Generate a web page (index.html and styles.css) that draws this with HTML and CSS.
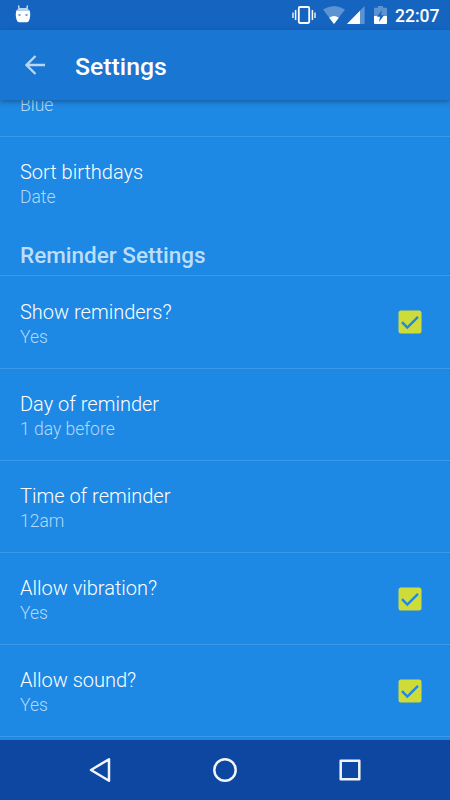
FILE: index.html
```html
<!DOCTYPE html>
<html lang="en">
<head>
<meta charset="utf-8">
<title>Settings</title>
<link rel="stylesheet" href="styles.css">
</head>
<body>
<div class="screen">
  <header class="status">
    <svg class="notification" width="16" height="18" viewBox="0 0 16 18">
      <path d="M3.500 .5L4.200 4M12.500 .5L11.800 4" stroke="#d5e4f6" stroke-width="1.300"/>
      <path d="M2 5.500Q2.300 3 4.500 3H11.500Q13.700 3 14 5.500Z" fill="#b9d3f0"/>
      <path d="M1.200 5.500H14.800Q16 12 13.800 16Q13.200 17.300 11.500 17.300H4.500Q2.800 17.300 2.200 16Q0 12 1.200 5.500Z" fill="#fff"/>
      <path d="M3.500 9h2v2h-2zM10.500 9h2v2h-2z" fill="#6f9fd8"/>
    </svg>
    <div class="indicators">
      <svg width="24" height="20" viewBox="0 0 24 20">
        <rect x="6.800" y="2" width="10.400" height="16" rx="1.200" fill="none" stroke="#fff" stroke-width="1.800"/>
        <path d="M3.600 5v10M20.400 5v10" stroke="#fff" stroke-width="1.500"/>
        <path d="M1 7.500v5.500M23 7.500v5.500" stroke="#fff" stroke-width="1.300"/>
      </svg>
      <svg class="wifi" width="22" height="18" viewBox="0 0 22 18">
        <path d="M0 3.600Q11-3.600 22 3.600L11 18Z" fill="#5b93d3"/>
        <path d="M6.200 11.700Q11 8.500 15.800 11.700L11 18Z" fill="#fff"/>
      </svg>
      <svg class="signal" width="18" height="18" viewBox="0 0 18 18">
        <path d="M0 18L17.600 0V18Z" fill="#5b93d3"/>
        <path d="M0 18L13 4.700V18Z" fill="#fff"/>
      </svg>
      <svg class="battery" width="13" height="18" viewBox="0 0 13 18">
        <path d="M1 1.800H4V0H9V1.800H12Q13 1.800 13 2.800V10H0V2.800Q0 1.800 1 1.800Z" fill="#5b93d3"/>
        <path d="M0 10H13V17Q13 18 12 18H1Q0 18 0 17Z" fill="#fff"/>
        <path d="M8 4L3 10.800H6L5 16L10 9.200H7Z" fill="#1565c0"/>
      </svg>
      <span class="clock">22:07</span>
    </div>
  </header>
  <div class="toolbar">
    <svg width="20" height="20" viewBox="0 0 20 20" fill="none" stroke="#bad6f2" stroke-width="2.300">
      <path d="M20 10H2M10.500 1L1.500 10L10.500 19"/>
    </svg>
    <h1>Settings</h1>
  </div>
  <main class="list">
    <div class="row first"><div><p class="value">Blue</p></div></div>
    <div class="row last"><div><p class="name">Sort birthdays</p><p class="value">Date</p></div></div>
    <h2>Reminder Settings</h2>
    <div class="row lead">
      <div><p class="name">Show reminders?</p><p class="value">Yes</p></div>
      <svg class="check" width="24" height="24" viewBox="0 0 24 24"><rect x=".5" y=".5" width="23" height="23" rx="2.500" fill="#cddc39"/><path d="M4 12.200L9.300 17.500L20 6.800" fill="none" stroke="#1e88e5" stroke-width="2.400"/></svg>
    </div>
    <div class="row"><div><p class="name">Day of reminder</p><p class="value">1 day before</p></div></div>
    <div class="row"><div><p class="name">Time of reminder</p><p class="value">12am</p></div></div>
    <div class="row">
      <div><p class="name">Allow vibration?</p><p class="value">Yes</p></div>
      <svg class="check" width="24" height="24" viewBox="0 0 24 24"><rect x=".5" y=".5" width="23" height="23" rx="2.500" fill="#cddc39"/><path d="M4 12.200L9.300 17.500L20 6.800" fill="none" stroke="#1e88e5" stroke-width="2.400"/></svg>
    </div>
    <div class="row">
      <div><p class="name">Allow sound?</p><p class="value">Yes</p></div>
      <svg class="check" width="24" height="24" viewBox="0 0 24 24"><rect x=".5" y=".5" width="23" height="23" rx="2.500" fill="#cddc39"/><path d="M4 12.200L9.300 17.500L20 6.800" fill="none" stroke="#1e88e5" stroke-width="2.400"/></svg>
    </div>
  </main>
  <nav class="navbar">
    <svg width="26" height="26" viewBox="0 0 26 26"><path d="M22 2.200V23.800L4 13Z"/></svg>
    <svg width="26" height="26" viewBox="0 0 26 26"><circle cx="13" cy="13" r="10.700"/></svg>
    <svg width="26" height="26" viewBox="0 0 26 26"><rect x="3.700" y="3.700" width="18.600" height="18.600"/></svg>
  </nav>
</div>
</body>
</html>
```
FILE: styles.css
```css
* { box-sizing: border-box; }
body, h1, h2, p { margin: 0; }
body { font-family: Roboto, sans-serif; color: #fff; }
svg { display: block; flex: none; }
.screen {
  width: 450px;
  height: 800px;
  display: flex;
  flex-direction: column;
  overflow: hidden;
  background: #1e88e5;
}
.status {
  height: 30px;
  flex: none;
  display: flex;
  justify-content: space-between;
  align-items: center;
  padding: 0 10.5px 0 14.5px;
  background: #1565c0;
}
.notification { margin-bottom: 3px; }
.indicators { display: flex; align-items: center; }
.wifi { margin-left: 7px; }
.signal { margin-left: 2px; }
.battery { margin-left: 9.5px; }
.clock { margin-left: 8px; padding-top: 2px; font-size: 17.5px; font-weight: 500; line-height: 28px; }
.toolbar {
  height: 70px;
  flex: none;
  display: flex;
  align-items: center;
  gap: 30px;
  padding: 0 25px;
  background: #1976d2;
  box-shadow: 0 2px 5px rgba(0, 0, 0, .3);
  z-index: 1;
}
h1 { padding-top: 3px; font-size: 24.8px; font-weight: 500; line-height: 32px; }
.list { flex: 1; min-height: 0; overflow: hidden; }
.row {
  height: 92px;
  display: flex;
  justify-content: space-between;
  padding: 23px 28px 0 20px;
  border-bottom: 1px solid #3c98e9;
}
.row.first { height: 37px; padding-top: 0; }
.row.first .value { margin-top: -7px; }
.row.last { height: 92px; border-bottom: 0; }
.row.lead { height: 93px; padding-top: 24px; }
.name { font-size: 20px; font-weight: 300; line-height: 24px; }
.value { margin-top: 1px; font-size: 17.5px; font-weight: 300; line-height: 25px; color: #b4d8f7; }
h2 {
  height: 47px;
  padding: 12px 20px 0;
  border-bottom: 1px solid #3c98e9;
  font-size: 22.5px;
  font-weight: 500;
  line-height: 28px;
  color: #bbdefb;
}
.check { margin-top: 11px; }
.lead .check { margin-top: 10px; }
.navbar {
  height: 60px;
  flex: none;
  display: flex;
  justify-content: center;
  align-items: center;
  gap: 99px;
  background: #0d47a1;
}
.navbar svg { fill: none; stroke: #f2f5fb; stroke-width: 2.5; stroke-linejoin: round; }
```
